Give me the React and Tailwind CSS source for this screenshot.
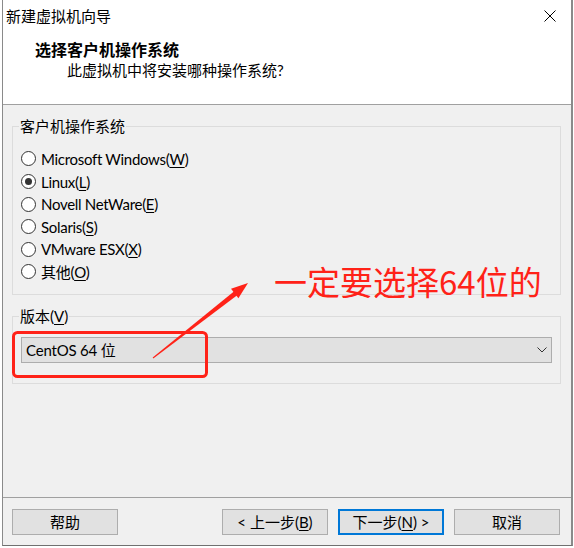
const RED = '#ff2218'

function Mn({ children }) {
  return <span className="underline decoration-1 underline-offset-[2px]">{children}</span>
}

function Radio({ checked, pre, k }) {
  return (
    <div className="flex h-[22.6px] items-center">
      <span className="flex h-[15px] w-[15px] items-center justify-center rounded-full border border-[#333] bg-white">
        {checked && <span className="h-[7px] w-[7px] rounded-full bg-[#333]" />}
      </span>
      <span className="ml-[5px] leading-[20px] tracking-[-0.3px]">
        {pre}(<Mn>{k}</Mn>)
      </span>
    </div>
  )
}

function Group({ title, className = '', children }) {
  return (
    <div className={`ml-[9px] mr-[10px] border border-[#dcdcdc] ${className}`}>
      <div className="-mt-[11px] ml-[6px] h-[20px] w-fit bg-[#f0f0f0] px-[1px] leading-[20px]">{title}</div>
      {children}
    </div>
  )
}

function Button({ children, primary }) {
  return (
    <button
      className={`flex h-[26px] w-[106px] items-center justify-center bg-[#e1e1e1] leading-[20px] ${
        primary ? 'border-2 border-[#0078d7]' : 'border border-[#adadad]'
      }`}
    >
      {children}
    </button>
  )
}

const systems = [
  ['Microsoft Windows', 'W'],
  ['Linux', 'L'],
  ['Novell NetWare', 'E'],
  ['Solaris', 'S'],
  ['VMware ESX', 'X'],
  ['其他', 'O'],
]

export default function App() {
  return (
    <div className="relative h-[548px] w-[574px] overflow-hidden bg-white font-['Lato','Noto_Sans_CJK_SC',sans-serif] text-[15px] text-black">
      <div className="ml-[2px] flex h-[546px] w-[571px] flex-col border-b border-l border-r-2 border-b-[#707070] border-l-[#8a8a8a] border-r-[#8a8a8a]">
        {/* header */}
        <div className="h-[105px] border-b border-[#a0a0a0] bg-white">
          <div className="flex h-[32px] items-center justify-between pl-[3px]">
            <span>新建虚拟机向导</span>
            <svg width="12" height="12" viewBox="0 0 12 12" className="mr-[15px]">
              <path d="M0.5 0.5 L11.5 11.5 M11.5 0.5 L0.5 11.5" stroke="#000" strokeWidth="1" />
            </svg>
          </div>
          <div className="mt-[8px] h-[20px] pl-[32px] text-[16px] font-bold leading-[20px]">选择客户机操作系统</div>
          <div className="h-[20px] pl-[64px] leading-[20px]">此虚拟机中将安装哪种操作系统?</div>
        </div>

        {/* body */}
        <div className="h-[392px] bg-[#f0f0f0] pt-[21px]">
          <Group title="客户机操作系统" className="h-[169px]">
            <div className="pl-[8px] pt-[11.7px]">
              {systems.map(([pre, k], i) => (
                <Radio key={k} pre={pre} k={k} checked={i === 1} />
              ))}
            </div>
          </Group>

          <Group
            title={
              <>
                版本(<Mn>V</Mn>)
              </>
            }
            className="mt-[21px] h-[68px]"
          >
            <div className="ml-[8px] mr-[8px] mt-[11px] flex h-[26px] items-center justify-between border border-[#adadad] bg-[#e1e1e1] pl-[4px] pr-[4px]">
              <span className="leading-[20px] tracking-[-0.2px]">CentOS 64 位</span>
              <svg width="10" height="6" viewBox="0 0 10 6">
                <path d="M0.5 0.5 L5 5 L9.5 0.5" fill="none" stroke="#333" strokeWidth="1" />
              </svg>
            </div>
          </Group>
        </div>

        {/* footer */}
        <div className="flex h-[48px] justify-between border-t border-[#a0a0a0] bg-[#f0f0f0] pl-[9px] pr-[11px] pt-[11px]">
          <Button>帮助</Button>
          <div className="flex gap-[10px]">
            <Button>
              &lt; 上一步(<Mn>B</Mn>)
            </Button>
            <Button primary>
              下一步(<Mn>N</Mn>) &gt;
            </Button>
            <Button>取消</Button>
          </div>
        </div>
      </div>

      {/* red annotation drawn over the screenshot */}
      <svg className="pointer-events-none absolute left-0 top-0" width="574" height="548">
        <rect x="13.5" y="332.5" width="193" height="44" rx="4" fill="none" stroke={RED} strokeWidth="3" />
        <polygon points="152.7,357.6 153.3,358.4 237.5,294.9 234.5,291.1" fill={RED} />
        <polygon points="248,283 231,288.8 238.4,298.2" fill={RED} />
      </svg>
      <div
        className="absolute left-[274px] top-[265px] whitespace-nowrap font-['Noto_Sans_CJK_SC',sans-serif] text-[33px] leading-[33px]"
        style={{ color: RED }}
      >
        一定要选择64位的
      </div>
    </div>
  )
}
